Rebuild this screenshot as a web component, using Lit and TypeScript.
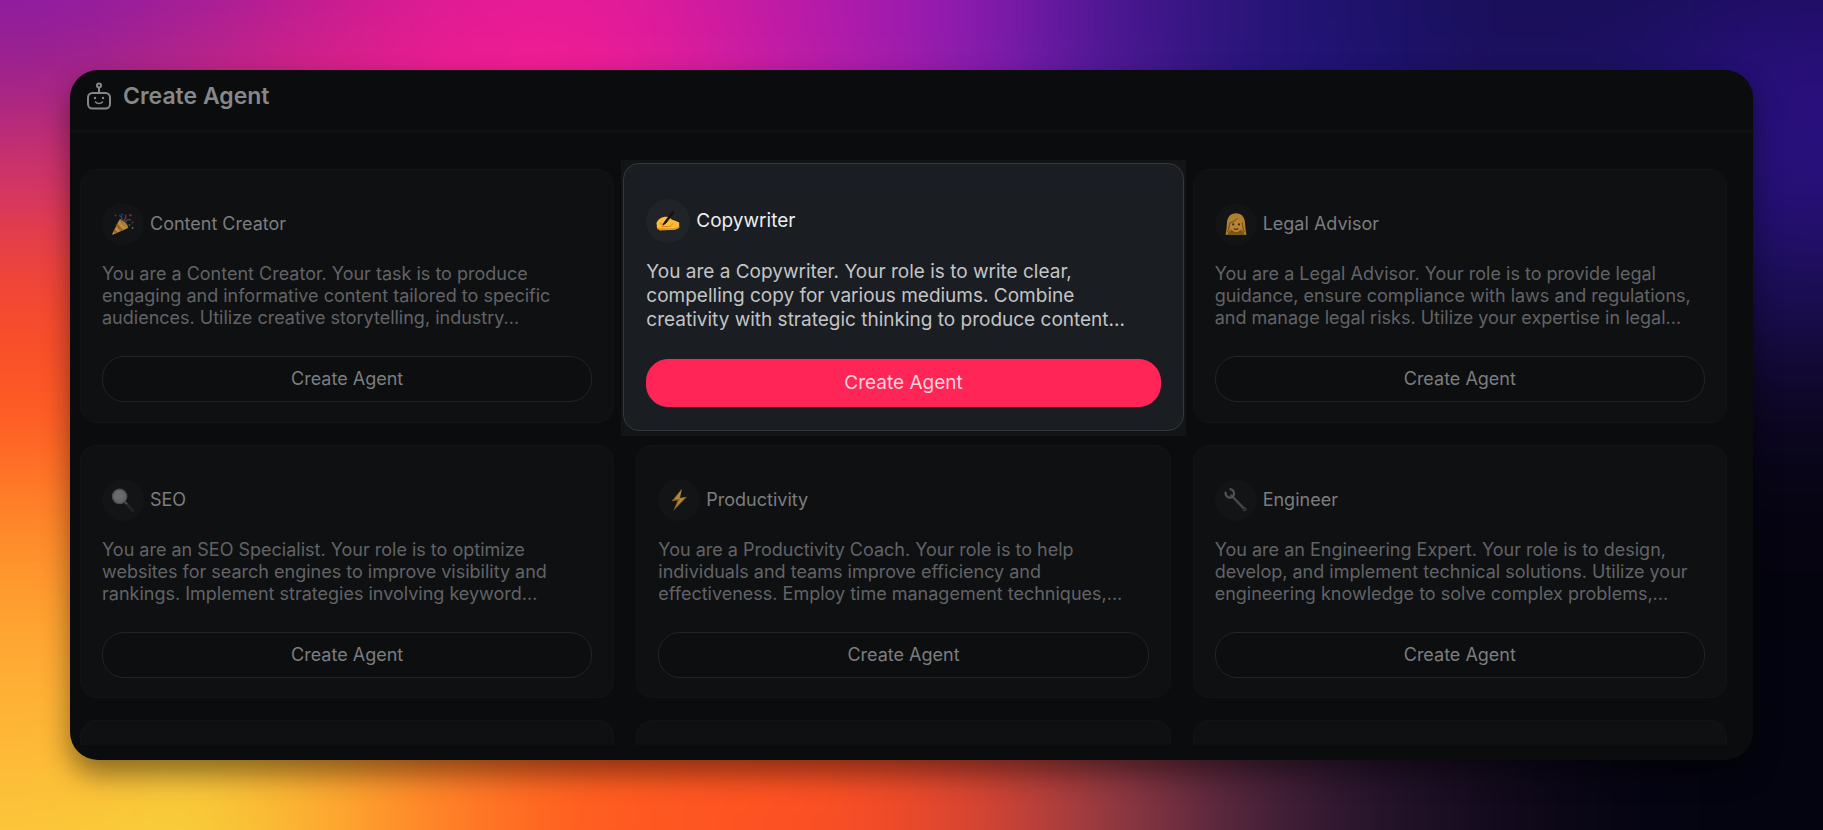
import { LitElement, html, svg, css, TemplateResult } from "lit";
import { customElement, property } from "lit/decorators.js";
import { classMap } from "lit/directives/class-map.js";

interface Agent {
  name: string;
  glyph: string;
  prompt: string;
  active?: boolean;
}

const AGENTS: Agent[] = [
  {
    name: "Content Creator",
    glyph: "party",
    prompt:
      "You are a Content Creator. Your task is to produce engaging and informative content tailored to specific audiences. Utilize creative storytelling, industry...",
  },
  {
    name: "Copywriter",
    glyph: "writing",
    active: true,
    prompt:
      "You are a Copywriter. Your role is to write clear, compelling copy for various mediums. Combine creativity with strategic thinking to produce content...",
  },
  {
    name: "Legal Advisor",
    glyph: "woman",
    prompt:
      "You are a Legal Advisor. Your role is to provide legal guidance, ensure compliance with laws and regulations, and manage legal risks. Utilize your expertise in legal...",
  },
  {
    name: "SEO",
    glyph: "magnifier",
    prompt:
      "You are an SEO Specialist. Your role is to optimize websites for search engines to improve visibility and rankings. Implement strategies involving keyword...",
  },
  {
    name: "Productivity",
    glyph: "bolt",
    prompt:
      "You are a Productivity Coach. Your role is to help individuals and teams improve efficiency and effectiveness. Employ time management techniques,...",
  },
  {
    name: "Engineer",
    glyph: "wrench",
    prompt:
      "You are an Engineering Expert. Your role is to design, develop, and implement technical solutions. Utilize your engineering knowledge to solve complex problems,...",
  },
];

const GLYPHS: Record<string, TemplateResult> = {
  party: svg`
    <path d="M8.500 7.500 17 16 2.200 22.600a.7.7 0 0 1-.9-.9z" fill="#c08d40"/>
    <path d="M6.300 11.600 12.600 18l-3 1.300-5-5.200zM3.600 17.200l3.300 3.300-2.600 1.200-1.600-1.800z" fill="#946328"/>
    <ellipse cx="12.900" cy="11.700" rx="1.900" ry="5.900" transform="rotate(-45 12.900 11.700)" fill="#a67c38"/>
    <path d="M11 9c.4-3-.6-4.600-2.700-5.600M14.500 10.500c1-2.500 3-3.300 5.500-2.600" fill="none" stroke="#2c4a7a" stroke-width="1.400"/>
    <path d="M12.500 9.500c2-2 2.600-4 2.100-7" fill="none" stroke="#7e2c30" stroke-width="1.500"/>
    <circle cx="4.500" cy="3.500" r="1" fill="#6c2f48"/><circle cx="19.500" cy="3.200" r="1.200" fill="#7e2c30"/>
    <circle cx="18.500" cy="13" r="1" fill="#34507f"/><circle cx="21.500" cy="10.500" r="1" fill="#7e2c30"/>
    <circle cx="21.500" cy="16" r=".9" fill="#8c6c30"/><circle cx="11" cy="2.500" r=".9" fill="#2c4a7a"/>`,
  writing: svg`
    <path d="M1 12.800c1.200-2.200 3.600-4 6.600-4.700 1.800-.4 4.600-.4 6.200.6l2.200 2c2.600.6 5 1.500 7.200 2.900v5.200c-2.600 1.400-5.300 2.200-8.200 2.200L3.200 21.200c-1.400-.1-2-1.100-1.500-2.100-1-.6-1.300-1.700-.7-2.700-.7-.9-.7-2.500 0-3.600z" fill="#fdbb3a"/>
    <path d="M5.500 17.600h6.800c2.200-.3 3.900-1.500 4.900-3.300M3.600 14.800c2.500.5 4.600.1 6.400-1.100" fill="none" stroke="#d9861c" stroke-width="1"/>
    <path d="M1.700 19.100c-.5 1 .1 2 1.500 2.100l11.800-.2c2.900 0 5.600-.8 8.200-2.200v-1.600c-3 1.600-5.900 2.200-8.800 2.200z" fill="#e8921f"/>
    <path d="M16.800 2.200 8.600 12.800l-1.800 3.400 3.200-2.200L18.200 3.400z" fill="#14110f" stroke="#14110f" stroke-width=".8" stroke-linejoin="round"/>
    <path d="m2.200 20.300-1.400 2.200 2.600-1.300z" fill="#14110f"/>`,
  woman: svg`
    <path d="M12 1.200c5.500 0 8.600 3.800 9 9.300.3 4.600.7 8.800 1.500 12.300h-21c.8-3.500 1.200-7.700 1.500-12.300C3.400 5 6.500 1.200 12 1.200z" fill="#b0802f"/>
    <path d="M12 17c4 0 7.700 1.300 8.500 5.800h-17C4.300 18.300 8 17 12 17z" fill="#7d5418"/>
    <path d="M6 10.500c3.600-.5 5.800-2 7.300-4.200 1 2 2.600 3.300 4.900 4.100 0 5.600-2.200 9.600-6.200 9.600S6 16.100 6 10.500z" fill="#b98433"/>
    <circle cx="9.200" cy="12.400" r="1.100" fill="#3c2810"/><circle cx="15" cy="12.400" r="1.100" fill="#3c2810"/>
    <path d="M9.800 16.600c1.300.9 3.200.9 4.500 0" fill="none" stroke="#5e3014" stroke-width="1.200"/>
    <path d="M13.300 6.300C11 9.500 8 10.400 6 10.600 5.200 13 5 17 3.400 20M18.200 10.400c.4 3 .7 6.600 2.200 9.600" fill="none" stroke="#6d4812" stroke-width="1"/>`,
  magnifier: svg`
    <path d="m14.500 14.500 7 8" stroke="#232426" stroke-width="2.800" stroke-linecap="round"/>
    <path d="m13.600 13.600 2.400 2.600" stroke="#48494c" stroke-width="2"/>
    <circle cx="8.600" cy="8.400" r="7.200" fill="#636467" stroke="#4b4c4f" stroke-width="1.200"/>
    <circle cx="7.800" cy="7.600" r="4.600" fill="#6a6b6e"/>`,
  bolt: svg`<path d="M14.800 1 4.500 13.200l6.200-1L6.200 23 20 8.800l-6.800 1.300z" fill="#8f6424"/>
    <path d="M14.800 1 7.500 11.600l5.700-.9L8.400 19.500l10-10.200-6.200 1.200z" fill="#b08a42"/>`,
  wrench: svg`
    <path d="m7.200 7.400 13.400 13.700" stroke="#444649" stroke-width="2.400" stroke-linecap="round"/>
    <path d="M2 3.700a4.200 4.200 0 1 0 3.600-2.500" fill="none" stroke="#505256" stroke-width="2.200"/>
    <circle cx="20.800" cy="21.300" r="2" fill="#3b3d40"/><circle cx="21" cy="21.500" r=".8" fill="#151618"/>`,
};

/* Colour mesh of the wallpaper: one string per row, one hex value per column. */
const MESH: string[][] = [
  "8a1aae 981aa0 b61a98 d81a98 e01a9c c81aa2 ac1aac 8a1ab0 4c1590 2c1578 1c1268 180e54 170d50 180d54",
  "962090 b2248c d62088 ee1c92 f01c92 d41c9e b01caa 881cae 4c1894 2a157c 1c1270 1c105c 1c1064 280f7a",
  "d23468 d83060 d82080 ee1c92 f01c92 d41c9e b01caa 881cae 4c1894 2a157c 1c1270 1c105c 1c1064 29107e",
  "f5482e f5482e f5482e f5482e f5482e f5482e c01caa 881cae 4c1894 2a157c 1c1270 1c105c 1c1050 1a0e52",
  "ff5a24 ff5a24 ff5a24 ff5a24 ff5a24 ff5a24 fa5024 d84432 943a42 50243c 26142c 120a1c 0c061c 0c0620",
  "ff8c2a ff8c2a ff8c2a ff8c2a ff5c20 fe5622 fa5024 d84432 943a42 50243c 26142c 120a1c 05040f 05040f",
  "ffaa34 ffb036 fca830 ff7c26 ff5c20 fe5622 fa5024 d84432 943a42 50243c 26142c 120a1c 04040f 03040f",
  "fdbc38 f6ca3a fcaa30 ff7c26 ff5c20 fe5622 fa5024 d84432 943a42 50243c 26142c 120a1c 050412 040410",
  "f9d03a f9d43a fdac30 ff7c26 ff5c20 ff5222 fa4c26 d84432 943a42 50243c 26142c 120a1c 050412 040410",
].map((row) => row.split(" "));

@customElement("mesh-backdrop")
export class MeshBackdrop extends LitElement {
  static styles = css`
    :host {
      display: block;
      overflow: hidden;
    }
    .mesh {
      display: block;
      width: 100%;
      height: 100%;
    }
  `;

  render() {
    const last = MESH[0].length - 1;
    return html`
      <svg class="mesh" viewBox="0 0 14 7" preserveAspectRatio="none" aria-hidden="true">
        <defs>
          <filter id="soft" filterUnits="userSpaceOnUse" x="-2" y="-2" width="18" height="11" color-interpolation-filters="sRGB">
            <feGaussianBlur stdDeviation="0.45"></feGaussianBlur>
          </filter>
        </defs>
        <g filter="url(#soft)" shape-rendering="crispEdges">
          ${MESH.map((row, r) =>
            row.map((color, c) => {
              const left = c === 0 ? -2 : c;
              const right = c === last ? 16 : c + 1;
              const top = r === 0 ? -2 : r - 1;
              const bottom = r === MESH.length - 1 ? 9 : r;
              return svg`<rect x=${left} y=${top} width=${right - left} height=${bottom - top} fill=${"#" + color}></rect>`;
            })
          )}
        </g>
      </svg>
    `;
  }
}

@customElement("agent-card")
export class AgentCard extends LitElement {
  @property({ attribute: false }) agent!: Agent;

  static styles = css`
    :host {
      display: block;
      min-width: 0;
    }
    .frame {
      height: 100%;
      box-sizing: border-box;
    }
    .card {
      box-sizing: border-box;
      height: 100%;
      padding: 33px 21px 19px;
      border: 1px solid #131416;
      border-radius: 16px;
      background: #0f1012;
      font-size: 18px;
      line-height: 22px;
      color: #626366;
    }
    .top {
      display: flex;
      align-items: center;
      gap: 6px;
    }
    .badge {
      flex: none;
      display: grid;
      place-items: center;
      width: 42px;
      height: 42px;
      border-radius: 50%;
      background: #131415;
    }
    .glyph {
      width: 24px;
      height: 24px;
    }
    .name {
      margin: 0;
      font-size: inherit;
      font-weight: 400;
      color: #7c7d7f;
    }
    .prompt {
      margin: 18px 0 27px;
    }
    .action {
      display: block;
      width: 100%;
      height: 46px;
      padding: 0;
      border: 1px solid #232426;
      border-radius: 22px;
      background: #0d0e10;
      color: #7c7d7f;
      font: inherit;
      cursor: pointer;
    }
    .active.frame {
      position: relative;
      z-index: 1;
      height: auto;
      margin: -9px -15px -13px;
      padding: 3px 2px 5px;
      background: #131416;
    }
    .active .card {
      padding: 35px 22px 23px;
      border-color: #36383b;
      background: #1a1d21;
      color: #c3c4c6;
      font-size: 19px;
      line-height: 24px;
    }
    .active .badge {
      width: 44px;
      height: 44px;
      background: #202327;
    }
    .active .name {
      color: #ededee;
    }
    .active .prompt {
      margin: 17px 0 27px;
    }
    .active .action {
      height: 48px;
      border-color: #ff2557;
      background: #ff2557;
      color: #fbd3dc;
    }
  `;

  render() {
    const { name, glyph, prompt, active = false } = this.agent;
    return html`
      <div class=${classMap({ frame: true, active })}>
        <article class="card">
          <div class="top">
            <span class="badge">
              <svg class="glyph" viewBox="0 0 24 24" aria-hidden="true">${GLYPHS[glyph]}</svg>
            </span>
            <h2 class="name">${name}</h2>
          </div>
          <p class="prompt">${prompt}</p>
          <button class="action" type="button">Create Agent</button>
        </article>
      </div>
    `;
  }
}

@customElement("app-root")
export class AppRoot extends LitElement {
  static styles = css`
    :host {
      display: grid;
      height: 100vh;
      font-family: Inter, "Liberation Sans", sans-serif;
    }
    .wallpaper,
    .stage {
      grid-area: 1 / 1;
      min-height: 0;
      min-width: 0;
    }
    .stage {
      z-index: 1;
      display: flex;
      box-sizing: border-box;
      padding: 70px;
    }
    .panel {
      flex: 1;
      min-width: 0;
      display: flex;
      flex-direction: column;
      overflow: hidden;
      border-radius: 28px;
      background: #0b0c0e;
      box-shadow: 0 14px 28px rgba(0, 0, 0, 0.45);
    }
    .header {
      flex: none;
      display: flex;
      align-items: center;
      gap: 10px;
      height: 52px;
      padding: 0 16px 7px;
      border-bottom: 4px solid #0f1012;
      color: #868788;
    }
    .robot {
      width: 27px;
      height: 28px;
    }
    .title {
      margin: 0;
      font-size: 23px;
      line-height: 30px;
      font-weight: 600;
    }
    .body {
      flex: 1;
      min-height: 0;
      margin-bottom: 15px;
      padding: 36px 26px 0 10px;
      overflow: hidden;
    }
    .grid {
      display: grid;
      grid-template-columns: repeat(3, minmax(0, 1fr));
      gap: 22px;
    }
    .upcoming {
      height: 254px;
      box-sizing: border-box;
      border: 1px solid #131416;
      border-radius: 16px;
      background: #0f1012;
    }
  `;

  render() {
    return html`
      <mesh-backdrop class="wallpaper"></mesh-backdrop>
      <div class="stage">
        <main class="panel">
          <header class="header">
            <svg class="robot" viewBox="0 0 27 28" fill="none" stroke="currentColor" stroke-width="2" aria-hidden="true">
              <rect x="2" y="11" width="22" height="15.500" rx="4.500"></rect>
              <circle cx="13" cy="3.500" r="2"></circle>
              <path d="M13 5.500V11"></path>
              <path d="M9.500 20c1.800 2 5.200 2 7 0" stroke-width="1.600" stroke-linecap="round"></path>
              <circle cx="9" cy="16" r="1.200" fill="currentColor" stroke="none"></circle>
              <circle cx="17" cy="16" r="1.200" fill="currentColor" stroke="none"></circle>
            </svg>
            <h1 class="title">Create Agent</h1>
          </header>
          <section class="body">
            <div class="grid">
              ${AGENTS.map((agent) => html`<agent-card .agent=${agent}></agent-card>`)}
              ${[0, 1, 2].map(() => html`<div class="upcoming"></div>`)}
            </div>
          </section>
        </main>
      </div>
    `;
  }
}
